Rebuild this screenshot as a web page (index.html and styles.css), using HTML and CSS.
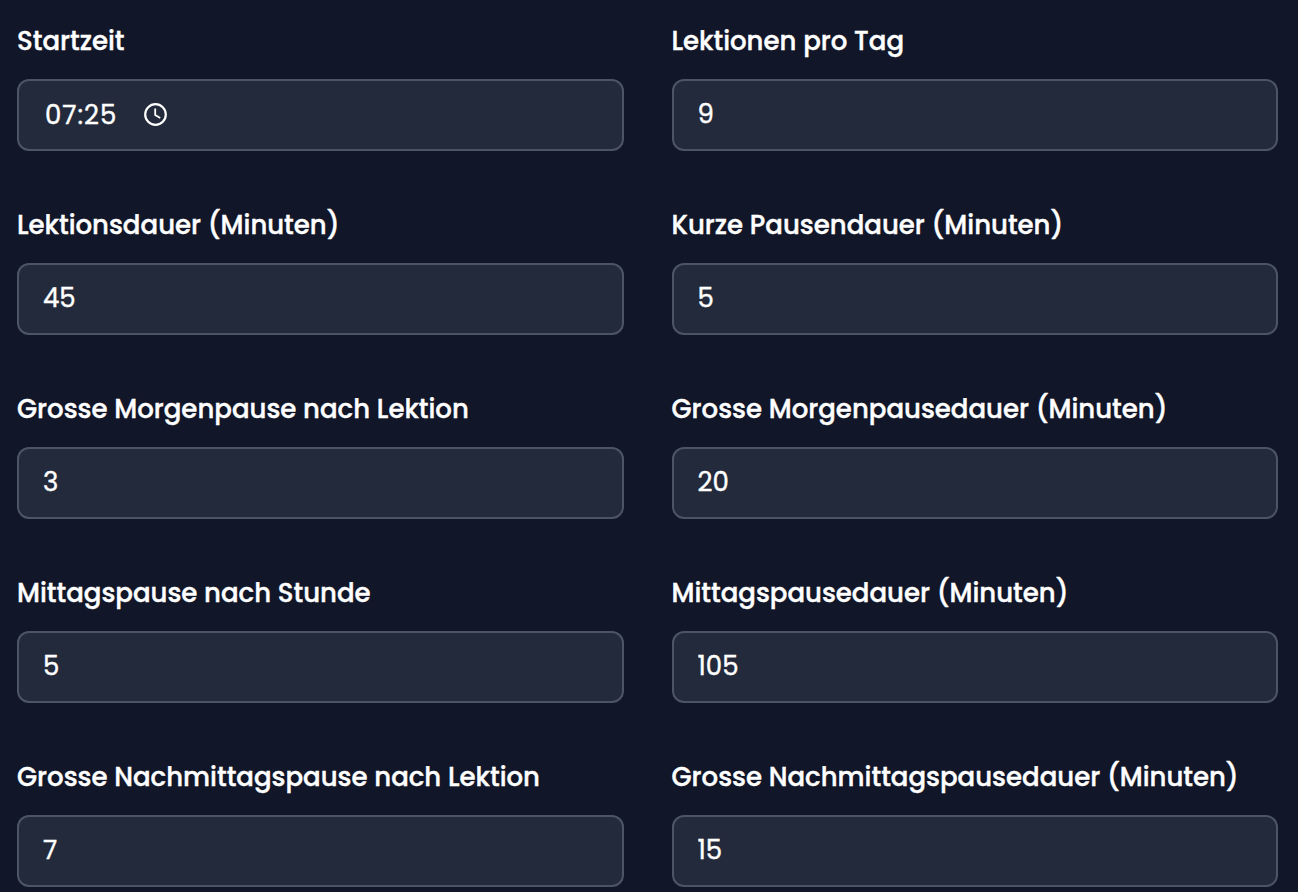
FILE: index.html
```html
<!DOCTYPE html>
<html lang="de">
<head>
    <meta charset="UTF-8">
    <meta name="viewport" content="width=device-width, initial-scale=1.0">
    <title>Stundenplan Einstellungen</title>
    <link rel="stylesheet" href="styles.css">
</head>
<body>
    <form class="settings">
        <div class="field">
            <label for="startTime">Startzeit</label>
            <div class="input time-input">
                <input type="text" id="startTime" value="07:25">
                <svg class="clock" viewBox="0 0 23 23" aria-hidden="true">
                    <circle cx="11.5" cy="11.5" r="10.3"/>
                    <path class="hands" d="M11.2 5.6v6.5l5 3"/>
                </svg>
            </div>
        </div>
        <div class="field">
            <label for="lessonsPerDay">Lektionen pro Tag</label>
            <input class="input" type="number" id="lessonsPerDay" value="9">
        </div>
        <div class="field">
            <label for="lessonDuration">Lektionsdauer (Minuten)</label>
            <input class="input" type="number" id="lessonDuration" value="45">
        </div>
        <div class="field">
            <label for="shortBreak">Kurze Pausendauer (Minuten)</label>
            <input class="input" type="number" id="shortBreak" value="5">
        </div>
        <div class="field">
            <label for="morningBreakAfter">Grosse Morgenpause nach Lektion</label>
            <input class="input" type="number" id="morningBreakAfter" value="3">
        </div>
        <div class="field">
            <label for="morningBreak">Grosse Morgenpausedauer (Minuten)</label>
            <input class="input" type="number" id="morningBreak" value="20">
        </div>
        <div class="field">
            <label for="lunchAfter">Mittagspause nach Stunde</label>
            <input class="input" type="number" id="lunchAfter" value="5">
        </div>
        <div class="field">
            <label for="lunchBreak">Mittagspausedauer (Minuten)</label>
            <input class="input" type="number" id="lunchBreak" value="105">
        </div>
        <div class="field">
            <label for="afternoonBreakAfter">Grosse Nachmittagspause nach Lektion</label>
            <input class="input" type="number" id="afternoonBreakAfter" value="7">
        </div>
        <div class="field">
            <label for="afternoonBreak">Grosse Nachmittagspausedauer (Minuten)</label>
            <input class="input" type="number" id="afternoonBreak" value="15">
        </div>
    </form>
</body>
</html>
```

FILE: styles.css
```css
* {
    box-sizing: border-box;
}
body {
    margin: 0;
    height: 892px;
    overflow: hidden;
    background-color: #111628;
    color: #fff;
    font-family: Poppins, Inter, sans-serif;
    -webkit-text-stroke: 0.4px #fff;
}
.settings {
    display: grid;
    grid-template-columns: 1fr 1fr;
    gap: 54px 48px;
    padding: 21px 20px 5px 17px;
}
.field {
    display: flex;
    flex-direction: column;
    gap: 18px;
}
label {
    font-size: 26px;
    font-weight: 500;
    line-height: 40px;
    white-space: nowrap;
}
.input {
    width: 100%;
    height: 72px;
    padding: 0 24px 1px;
    border: 2px solid #4b5565;
    border-radius: 12px;
    background-color: #232a3b;
    color: #fff;
    font-family: inherit;
    font-size: 26px;
    font-weight: 400;
}
.input[type="number"] {
    appearance: textfield;
    -moz-appearance: textfield;
}
.input::-webkit-inner-spin-button {
    -webkit-appearance: none;
    margin: 0;
}
.time-input {
    display: flex;
    align-items: center;
    gap: 23px;
    padding: 0 26px;
}
.time-input input {
    width: 76px;
    padding: 0;
    border: none;
    background: none;
    color: inherit;
    font: inherit;
    letter-spacing: 1px;
}
.clock {
    width: 23px;
    height: 23px;
    margin-bottom: 1px;
    fill: none;
    stroke: #fff;
    stroke-width: 2.2;
}
.clock .hands {
    stroke-width: 1.8;
}
```
